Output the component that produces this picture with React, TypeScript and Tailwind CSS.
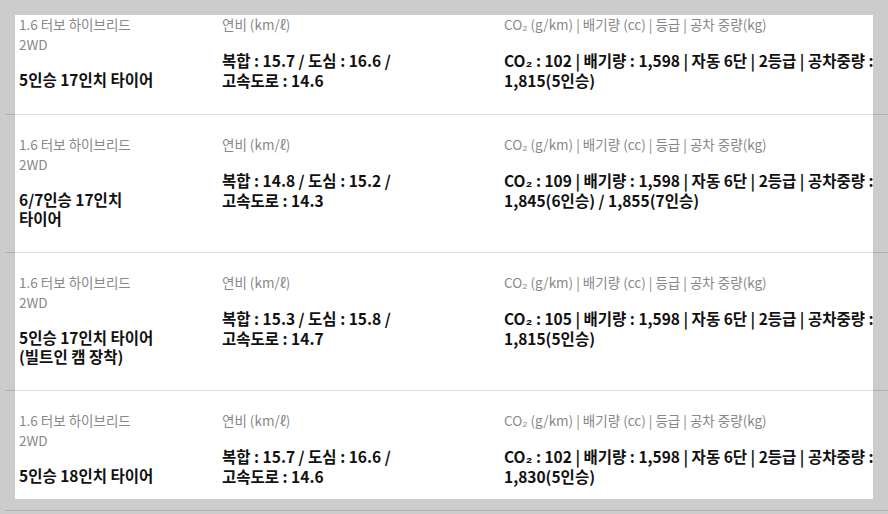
const rows = [
  {
    spec: '5인승 17인치 타이어',
    eff: '복합 : 15.7 / 도심 : 16.6 / 고속도로 : 14.6',
    co2: 'CO₂ : 102 | 배기량 : 1,598 | 자동 6단 | 2등급 | 공차중량 : 1,815(5인승)',
  },
  {
    spec: '6/7인승 17인치 타이어',
    eff: '복합 : 14.8 / 도심 : 15.2 / 고속도로 : 14.3',
    co2: 'CO₂ : 109 | 배기량 : 1,598 | 자동 6단 | 2등급 | 공차중량 : 1,845(6인승) / 1,855(7인승)',
  },
  {
    spec: '5인승 17인치 타이어 (빌트인 캠 장착)',
    eff: '복합 : 15.3 / 도심 : 15.8 / 고속도로 : 14.7',
    co2: 'CO₂ : 105 | 배기량 : 1,598 | 자동 6단 | 2등급 | 공차중량 : 1,815(5인승)',
  },
  {
    spec: '5인승 18인치 타이어',
    eff: '복합 : 15.7 / 도심 : 16.6 / 고속도로 : 14.6',
    co2: 'CO₂ : 102 | 배기량 : 1,598 | 자동 6단 | 2등급 | 공차중량 : 1,830(5인승)',
  },
];

const Label = ({ children }: { children: React.ReactNode }) => (
  <p className="text-[13.5px] leading-[20px] text-[#888888]">{children}</p>
);

const Value = ({ children }: { children: React.ReactNode }) => (
  <p className="mt-4 text-[15.5px] leading-[20px] font-bold text-[#111111] first-line:leading-[19px]">
    {children}
  </p>
);

const SpecRow = ({ spec, eff, co2 }: { spec: string; eff: string; co2: string }) => (
  <div className="flex pl-[14px] pt-[19px] pb-[24px] border-b border-[#dddddd]">
    <div className="w-[203px] shrink-0 pr-[65px]">
      <Label>1.6 터보 하이브리드 2WD</Label>
      <p className="mt-4 text-[15.5px] leading-[19px] font-bold text-[#111111]">{spec}</p>
    </div>
    <div className="w-[282px] shrink-0 pr-[80px]">
      <Label>연비 (km/ℓ)</Label>
      <Value>{eff}</Value>
    </div>
    <div className="flex-1 min-w-0">
      <Label>CO₂ (g/km) | 배기량 (cc) | 등급 | 공차 중량(kg)</Label>
      <Value>{co2}</Value>
    </div>
  </div>
);

export default function App() {
  return (
    <div className="relative h-[514px] w-full overflow-hidden bg-white font-['Noto_Sans_CJK_KR',sans-serif] [word-break:keep-all]">
      <div className="ml-[5px] -mt-[5px]">
        {rows.map((r) => (
          <SpecRow key={r.eff + r.co2} {...r} />
        ))}
      </div>
      {/* highlight overlay */}
      <div className="pointer-events-none absolute left-[15px] top-[15px] w-[858px] h-[484px] shadow-[0_0_0_2000px_rgba(0,0,0,0.2)]" />
    </div>
  );
}
